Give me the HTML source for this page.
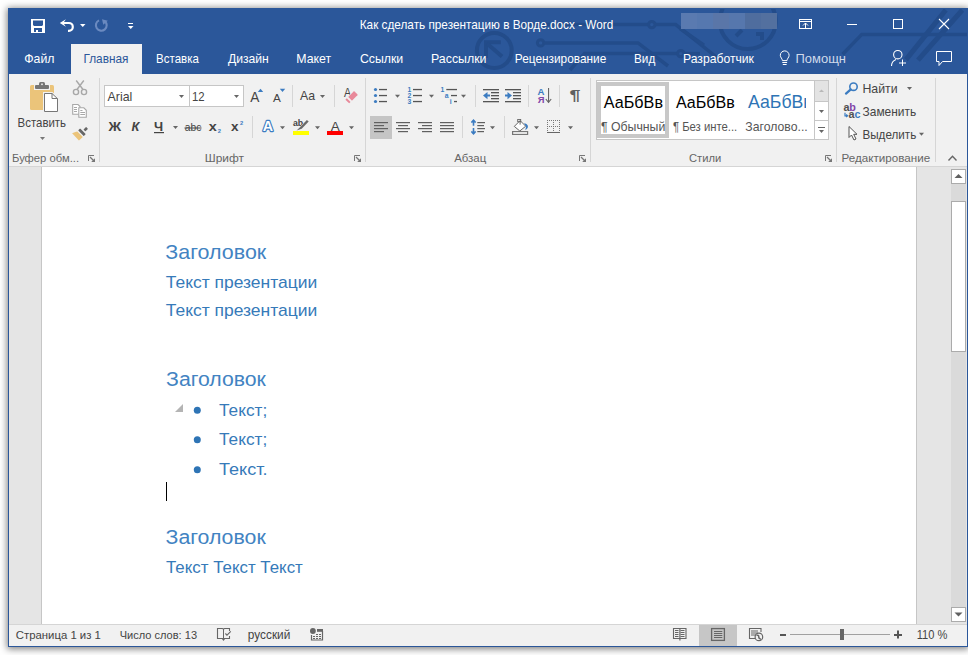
<!DOCTYPE html>
<html><head><meta charset="utf-8"><style>
html,body{margin:0;padding:0;width:968px;height:655px;overflow:hidden;background:#fff;font-family:"Liberation Sans", sans-serif;}
div,svg,text{font-family:"Liberation Sans", sans-serif;}
</style></head><body>
<div style="position:absolute;left:8px;top:8px;width:960px;height:639px;box-shadow:0 1px 7px 1px rgba(0,0,0,0.5);"></div>
<div style="position:absolute;left:8px;top:8px;width:960px;height:639px;background:#2B579A;"></div>
<div style="position:absolute;left:9px;top:74px;width:958px;height:92px;background:#F1F1F1;"></div>
<div style="position:absolute;left:9px;top:166px;width:958px;height:1px;background:#D5D5D5;"></div>
<div style="position:absolute;left:9px;top:167px;width:958px;height:457px;background:#E5E5E5;"></div>
<div style="position:absolute;left:41px;top:167px;width:1px;height:457px;background:#C6C6C6;"></div>
<div style="position:absolute;left:42px;top:167px;width:874px;height:457px;background:#FFFFFF;"></div>
<div style="position:absolute;left:916px;top:167px;width:1px;height:457px;background:#C6C6C6;"></div>
<div style="position:absolute;left:9px;top:624px;width:958px;height:1px;background:#D5D5D5;"></div>
<div style="position:absolute;left:9px;top:625px;width:958px;height:21px;background:#F1F1F1;"></div>
<div style="position:absolute;left:71px;top:44px;width:71px;height:30px;background:#F1F1F1;"></div>
<svg style="position:absolute;left:0;top:0" width="968" height="655" font-family="Liberation Sans, sans-serif">
<defs><clipPath id="tb"><rect x="9" y="9" width="958" height="65"/></clipPath></defs><g clip-path="url(#tb)"><g fill="none" stroke="#234C8A" stroke-width="3.5"><circle cx="494.3" cy="50.5" r="17.4" stroke-width="4"/><path d="M486 58 V42.3 H500.8" stroke-width="4"/><path d="M487 43.5 L502 56.5" stroke-width="4"/><path d="M520 24.6 H648"/><circle cx="651.8" cy="24.6" r="3.2" stroke-width="3"/><path d="M655 24.6 H675.7 L720 60"/><circle cx="540.6" cy="42.9" r="3.2" stroke-width="3"/><path d="M543.8 42.9 H638 L668 66"/><path d="M570 70 L584.6 53.6 H677.5"/><circle cx="680.8" cy="53.6" r="3.2" stroke-width="3"/><path d="M684 53.6 H700"/><circle cx="747.8" cy="21" r="28" stroke-width="4"/><path d="M680 28.5 L704 45.2"/><path d="M736 36 L742 30 M756 34 H762 V40" stroke-width="4"/><path d="M842.6 54.3 L861.8 34.4 H968"/><path d="M906 59.6 L945.8 10 M918 60.2 L962.3 10" stroke-width="5"/></g></g>
<text x="24.22" y="63" font-size="13.04" fill="#fff" textLength="30.22" lengthAdjust="spacingAndGlyphs" >Файл</text>
<text x="83.45" y="63" font-size="13.04" fill="#2B579A" textLength="45.03" lengthAdjust="spacingAndGlyphs" >Главная</text>
<text x="156.08" y="63" font-size="13.04" fill="#fff" textLength="42.74" lengthAdjust="spacingAndGlyphs" >Вставка</text>
<text x="227.94" y="63" font-size="13.04" fill="#fff" textLength="40.87" lengthAdjust="spacingAndGlyphs" >Дизайн</text>
<text x="296.31" y="63" font-size="13.04" fill="#fff" textLength="34.94" lengthAdjust="spacingAndGlyphs" >Макет</text>
<text x="359.88" y="63" font-size="13.04" fill="#fff" textLength="43.39" lengthAdjust="spacingAndGlyphs" >Ссылки</text>
<text x="431.01" y="63" font-size="13.04" fill="#fff" textLength="55.54" lengthAdjust="spacingAndGlyphs" >Рассылки</text>
<text x="514.85" y="63" font-size="13.04" fill="#fff" textLength="91.40" lengthAdjust="spacingAndGlyphs" >Рецензирование</text>
<text x="634.06" y="63" font-size="13.04" fill="#fff" textLength="21.16" lengthAdjust="spacingAndGlyphs" >Вид</text>
<text x="683.03" y="63" font-size="13.04" fill="#fff" textLength="70.93" lengthAdjust="spacingAndGlyphs" >Разработчик</text>
<text x="795.56" y="63" font-size="12.75" fill="#D0DAEA" textLength="50.42" lengthAdjust="spacingAndGlyphs" >Помощн</text>
<text x="359.76" y="29" font-size="13.04" fill="#fff" textLength="253.51" lengthAdjust="spacingAndGlyphs" >Как сделать презентацию в Ворде.docx - Word</text>
<text x="17.59" y="127" font-size="12.03" fill="#444444" textLength="48.46" lengthAdjust="spacingAndGlyphs" >Вставить</text>
<text x="12.00" y="162" font-size="11.59" fill="#666666" textLength="67.05" lengthAdjust="spacingAndGlyphs" >Буфер обм...</text>
<text x="204.75" y="162" font-size="11.59" fill="#666666" textLength="39.19" lengthAdjust="spacingAndGlyphs" >Шрифт</text>
<text x="454.20" y="162" font-size="11.59" fill="#666666" textLength="32.03" lengthAdjust="spacingAndGlyphs" >Абзац</text>
<text x="689.04" y="162" font-size="11.59" fill="#666666" textLength="32.25" lengthAdjust="spacingAndGlyphs" >Стили</text>
<text x="841.57" y="162" font-size="11.59" fill="#666666" textLength="88.59" lengthAdjust="spacingAndGlyphs" >Редактирование</text>
<text x="862.42" y="93" font-size="12.32" fill="#444444" textLength="35.13" lengthAdjust="spacingAndGlyphs" >Найти</text>
<text x="862.58" y="116" font-size="12.32" fill="#444444" textLength="53.58" lengthAdjust="spacingAndGlyphs" >Заменить</text>
<text x="862.47" y="139" font-size="12.32" fill="#444444" textLength="53.74" lengthAdjust="spacingAndGlyphs" >Выделить</text>
<rect x="104.5" y="85.5" width="139" height="21" fill="#fff" stroke="#C6C6C6" stroke-width="1"/>
<rect x="189" y="86" width="1" height="20" fill="#C6C6C6"/>
<text x="107.60" y="101" font-size="12.75" fill="#444444" textLength="24.71" lengthAdjust="spacingAndGlyphs" >Arial</text>
<text x="191.95" y="101" font-size="12.75" fill="#444444" textLength="12.65" lengthAdjust="spacingAndGlyphs" >12</text>
<text x="108.50" y="131" font-size="13.04" fill="#444444" font-weight="bold" textLength="12.61" lengthAdjust="spacingAndGlyphs" >Ж</text>
<text x="131.5" y="131" font-size="12.8" fill="#444444" font-weight="bold" font-style="italic" >К</text>
<text x="154.09" y="131" font-size="13.04" fill="#444444" font-weight="bold" textLength="9.09" lengthAdjust="spacingAndGlyphs" >Ч</text>
<text x="184.79" y="131" font-size="11.30" fill="#444444" textLength="16.49" lengthAdjust="spacingAndGlyphs" >abc</text>
<text x="208.86" y="131" font-size="12.61" fill="#444444" font-weight="bold" textLength="8.03" lengthAdjust="spacingAndGlyphs" >x</text>
<text x="217.7" y="133" font-size="5.8" fill="#3C7CC1" font-weight="bold" >2</text>
<text x="231.06" y="131" font-size="12.61" fill="#444444" font-weight="bold" textLength="7.52" lengthAdjust="spacingAndGlyphs" >x</text>
<text x="239.9" y="125.2" font-size="5.8" fill="#3C7CC1" font-weight="bold" >2</text>
<text x="250.30" y="102" font-size="14.49" fill="#444444" textLength="9.13" lengthAdjust="spacingAndGlyphs" >A</text>
<text x="273.00" y="102" font-size="11.30" fill="#444444" textLength="7.82" lengthAdjust="spacingAndGlyphs" >A</text>
<text x="300.10" y="100" font-size="13.33" fill="#444444" textLength="15.04" lengthAdjust="spacingAndGlyphs" >Aa</text>
<text x="343.90" y="97" font-size="11.88" fill="#444444" textLength="7.12" lengthAdjust="spacingAndGlyphs" >A</text>
<text x="262.64" y="131.3" font-size="14.49" fill="#FFFFFF" font-weight="bold" textLength="10.35" lengthAdjust="spacingAndGlyphs" stroke="#3C7CC1" stroke-width="2.3" paint-order="stroke" stroke-linejoin="round">A</text>
<text x="292.94" y="126" font-size="9.57" fill="#444444" font-weight="bold" textLength="10.23" lengthAdjust="spacingAndGlyphs" >ab</text>
<text x="330.80" y="130.5" font-size="13.48" fill="#444444" textLength="9.03" lengthAdjust="spacingAndGlyphs" >A</text>
<text x="407.6" y="92" font-size="6.8" fill="#3C7CC1" font-weight="bold" >1</text>
<text x="407.6" y="98" font-size="6.8" fill="#3C7CC1" font-weight="bold" >2</text>
<text x="407.6" y="104" font-size="6.8" fill="#3C7CC1" font-weight="bold" >3</text>
<text x="440.6" y="92" font-size="6.8" fill="#3C7CC1" font-weight="bold" >1</text>
<text x="444.7" y="98" font-size="6.8" fill="#3C7CC1" font-weight="bold" >a</text>
<text x="449.7" y="104" font-size="6.8" fill="#3C7CC1" font-weight="bold" >i</text>
<text x="537.5" y="95" font-size="9.6" fill="#3C7CC1" font-weight="bold" >A</text>
<text x="537.7" y="103" font-size="9.4" fill="#8144A8" font-weight="bold" >Я</text>
<text x="569.61" y="100" font-size="14.93" fill="#606060" font-weight="bold" textLength="11.01" lengthAdjust="spacingAndGlyphs" >¶</text>
<text x="843.5" y="111" font-size="10.8" fill="#505050" font-weight="bold" >a</text>
<text x="849.2" y="111" font-size="10.8" fill="#8144A8" font-weight="bold" >b</text>
<text x="848.6" y="118" font-size="10.8" fill="#505050" font-weight="bold" >a</text>
<text x="854.6" y="118" font-size="10.8" fill="#3C7CC1" font-weight="bold" >c</text>
<rect x="596.5" y="80.5" width="232" height="59" fill="#fff" stroke="#C6C6C6" stroke-width="1"/>
<rect x="599" y="84" width="68" height="52" fill="#fff" stroke="#C8C8C8" stroke-width="4"/>
<text x="603.80" y="108" font-size="16.23" fill="#000" textLength="59.17" lengthAdjust="spacingAndGlyphs" >АаБбВв</text>
<text x="675.90" y="108" font-size="16.52" fill="#000" textLength="58.87" lengthAdjust="spacingAndGlyphs" >АаБбВв</text>
<svg x="744" y="86" width="62" height="30" overflow="hidden">
<text x="4.00" y="22" font-size="18.26" fill="#2E74B5" textLength="64.74" lengthAdjust="spacingAndGlyphs" >АаБбВв</text>
</svg>
<text x="601.01" y="131" font-size="12.32" fill="#555" textLength="64.25" lengthAdjust="spacingAndGlyphs" >¶ Обычный</text>
<text x="672.95" y="131" font-size="12.03" fill="#555" textLength="64.31" lengthAdjust="spacingAndGlyphs" >¶ Без инте...</text>
<text x="745.37" y="131" font-size="12.17" fill="#555" textLength="62.36" lengthAdjust="spacingAndGlyphs" >Заголово...</text>
<text x="165.35" y="259" font-size="20.29" fill="#4283C2" textLength="100.88" lengthAdjust="spacingAndGlyphs" >Заголовок</text>
<text x="165.75" y="288" font-size="17.39" fill="#367AB9" textLength="151.49" lengthAdjust="spacingAndGlyphs" >Текст презентации</text>
<text x="165.75" y="316" font-size="17.39" fill="#367AB9" textLength="151.49" lengthAdjust="spacingAndGlyphs" >Текст презентации</text>
<text x="166.06" y="386" font-size="20.58" fill="#4283C2" textLength="99.88" lengthAdjust="spacingAndGlyphs" >Заголовок</text>
<text x="219.06" y="416" font-size="17.39" fill="#367AB9" textLength="48.22" lengthAdjust="spacingAndGlyphs" >Текст;</text>
<text x="219.06" y="445" font-size="17.39" fill="#367AB9" textLength="48.22" lengthAdjust="spacingAndGlyphs" >Текст;</text>
<text x="219.04" y="475" font-size="17.39" fill="#367AB9" textLength="48.47" lengthAdjust="spacingAndGlyphs" >Текст.</text>
<text x="165.55" y="544" font-size="20.72" fill="#4283C2" textLength="100.18" lengthAdjust="spacingAndGlyphs" >Заголовок</text>
<text x="165.96" y="573" font-size="17.10" fill="#367AB9" textLength="136.85" lengthAdjust="spacingAndGlyphs" >Текст Текст Текст</text>
<text x="15.73" y="639" font-size="11.59" fill="#444444" textLength="85.18" lengthAdjust="spacingAndGlyphs" >Страница 1 из 1</text>
<text x="119.72" y="639" font-size="11.59" fill="#444444" textLength="77.31" lengthAdjust="spacingAndGlyphs" >Число слов: 13</text>
<text x="247.83" y="639" font-size="12.03" fill="#444444" textLength="42.48" lengthAdjust="spacingAndGlyphs" >русский</text>
<text x="916.67" y="639" font-size="12.17" fill="#444444" textLength="30.74" lengthAdjust="spacingAndGlyphs" >110 %</text>
<rect x="31" y="19" width="14" height="14" fill="#FFFFFF"/>
<path d="M33 20.5 H43 V25 L42 26 H34 L33 25 Z" fill="#2B579A"/>
<rect x="34" y="28" width="8" height="4" fill="#2B579A"/>
<rect x="36" y="30" width="2" height="2" fill="#FFFFFF"/>
<path d="M63.5 23 H68.9 A3.9 3.9 0 0 1 68.9 30.8 H68" fill="none" stroke="#FFFFFF" stroke-width="2.2"/>
<path d="M59.8 23 L65.9 19.2 L64 22 V24 L65.9 26.8 Z" fill="#FFFFFF"/>
<path d="M80.0 23.9 H85.5 L82.75 26.9 Z" fill="#FFFFFF"/>
<path d="M99 20.4 A5.4 5.4 0 1 0 104.8 21.2" fill="none" stroke="#6B8AC0" stroke-width="2.1"/>
<path d="M102 19.2 L107.8 20.7 L103.3 24.8 Z" fill="#6B8AC0"/>
<rect x="128" y="23" width="5" height="1" fill="#FFFFFF"/>
<path d="M128 26 H133.5 L130.75 29 Z" fill="#FFFFFF"/>
<rect x="681" y="13" width="16" height="16" fill="#5A7AB0"/>
<rect x="697" y="13" width="16" height="16" fill="#5678AF"/>
<rect x="713" y="13" width="16" height="16" fill="#5A76A8"/>
<rect x="729" y="13" width="16" height="16" fill="#5677AD"/>
<rect x="745" y="13" width="16" height="16" fill="#4F6D9E"/>
<rect x="761" y="13" width="16" height="16" fill="#53709F"/>
<rect x="799.5" y="19.5" width="12" height="9" fill="none" stroke="#FFFFFF"/>
<rect x="800" y="21" width="11" height="1" fill="#FFFFFF"/>
<rect x="805" y="23" width="1" height="5" fill="#FFFFFF"/>
<path d="M803 25.5 L805.5 23 L808 25.5" fill="none" stroke="#FFFFFF"/>
<rect x="847" y="24" width="10" height="1" fill="#FFFFFF"/>
<rect x="893.5" y="19.5" width="9" height="9" fill="none" stroke="#FFFFFF"/>
<path d="M939 19 L949 29 M949 19 L939 29" stroke="#FFFFFF" stroke-width="1.1"/>
<path d="M782.4 60.6 C782.4 58.6 780.3 57.6 780.3 55.3 A4.4 4.4 0 0 1 789.1 55.3 C789.1 57.6 787 58.6 787 60.6 Z" fill="none" stroke="#FFFFFF" stroke-width="1"/>
<rect x="782.3" y="62" width="4.800000000000068" height="1" fill="#FFFFFF"/>
<rect x="782.8" y="64" width="3.800000000000068" height="1" fill="#FFFFFF"/>
<circle cx="897.8" cy="54.7" r="4.2" fill="none" stroke="#FFFFFF" stroke-width="1.1"/>
<path d="M891.5 66 A7 7 0 0 1 896 59.5" fill="none" stroke="#FFFFFF" stroke-width="1.1"/>
<rect x="899" y="62.5" width="7" height="1" fill="#FFFFFF"/>
<rect x="902" y="59.5" width="1" height="6.5" fill="#FFFFFF"/>
<path d="M936.5 51.5 H951.5 V61.5 H942.5 L939 65.5 V61.5 H936.5 Z" fill="none" stroke="#FFFFFF" stroke-width="1"/>
<rect x="30" y="85" width="24" height="25" rx="1.5" fill="#EBC47A"/>
<rect x="34" y="84" width="16" height="6" fill="#F1F1F1"/>
<rect x="35" y="85" width="14" height="4" rx="1" fill="#767676"/>
<rect x="39" y="82" width="6" height="4" rx="1.5" fill="#767676"/>
<rect x="41.2" y="83.5" width="1.6" height="1.6" fill="#F1F1F1"/>
<path d="M43 92 H52.5 L59 98 V113 H43 Z" fill="#F1F1F1"/>
<path d="M44.5 93.5 H52 L57.5 98.7 V111.5 H44.5 Z" fill="#FFFFFF" stroke="#767676" stroke-width="1"/>
<path d="M52 93.5 V98.5 H57.5" fill="none" stroke="#767676" stroke-width="1"/>
<path d="M40.0 137.1 H45.0 L42.5 140.1 Z" fill="#777"/>
<g fill="none" stroke="#A8A8A8" stroke-width="1.4"><path d="M76.2 80.5 L83 89.5 M83.8 80.5 L77 89.5"/><circle cx="76" cy="92" r="2.6"/><circle cx="84" cy="92" r="2.6"/></g>
<g fill="#FFFFFF" stroke="#A8A8A8" stroke-width="1.1"><path d="M72.7 104.5 H78 L80 106.5 V114.3 H72.7 Z"/><path d="M78.8 107.8 H83.8 L86.3 110.3 V117.3 H78.8 Z"/></g>
<g fill="#A8A8A8"><rect x="74" y="107" width="3" height="1"/><rect x="74" y="109" width="3" height="1"/><rect x="74" y="111" width="3" height="1"/><rect x="80.3" y="110" width="2.2" height="1"/><rect x="80.3" y="112" width="4.7" height="1"/><rect x="80.3" y="114" width="4.7" height="1"/></g>
<g transform="translate(80.5 133.8) rotate(-45)"><path d="M-0.7 -3.8 L-2.3 -5 L-5.5 -6.4 L-5.9 3.7 L-0.7 4 Z" fill="#EBC47A"/><rect x="0.7" y="-4" width="2.8" height="7.9" rx="0.5" fill="#676767"/><rect x="5.1" y="-0.9" width="3.7" height="2.7" rx="0.5" fill="#676767"/></g>
<path d="M88.5 161 V155.5 H94" fill="none" stroke="#777" stroke-width="1"/>
<path d="M90 157 L94 161" stroke="#777" stroke-width="1.2"/>
<path d="M95 158.2 V162 H91.2 Z" fill="#777"/>
<path d="M354.5 161 V155.5 H360" fill="none" stroke="#777" stroke-width="1"/>
<path d="M356 157 L360 161" stroke="#777" stroke-width="1.2"/>
<path d="M361 158.2 V162 H357.2 Z" fill="#777"/>
<path d="M579.5 161 V155.5 H585" fill="none" stroke="#777" stroke-width="1"/>
<path d="M581 157 L585 161" stroke="#777" stroke-width="1.2"/>
<path d="M586 158.2 V162 H582.2 Z" fill="#777"/>
<path d="M825.5 161 V155.5 H831" fill="none" stroke="#777" stroke-width="1"/>
<path d="M827 157 L831 161" stroke="#777" stroke-width="1.2"/>
<path d="M832 158.2 V162 H828.2 Z" fill="#777"/>
<rect x="99" y="78" width="1" height="84" fill="#D6D6D6"/>
<rect x="365" y="78" width="1" height="84" fill="#D6D6D6"/>
<rect x="590" y="78" width="1" height="84" fill="#D6D6D6"/>
<rect x="836" y="78" width="1" height="84" fill="#D6D6D6"/>
<rect x="935" y="78" width="1" height="84" fill="#D6D6D6"/>
<rect x="292" y="85" width="1" height="22" fill="#D6D6D6"/>
<rect x="334" y="85" width="1" height="22" fill="#D6D6D6"/>
<rect x="252" y="116" width="1" height="22" fill="#D6D6D6"/>
<rect x="475" y="85" width="1" height="22" fill="#D6D6D6"/>
<rect x="528" y="85" width="1" height="22" fill="#D6D6D6"/>
<rect x="559" y="85" width="1" height="22" fill="#D6D6D6"/>
<rect x="462" y="116" width="1" height="22" fill="#D6D6D6"/>
<rect x="504" y="116" width="1" height="22" fill="#D6D6D6"/>
<path d="M179.0 95.0 H184.0 L181.5 98.0 Z" fill="#666666"/>
<path d="M234.0 95.0 H239.0 L236.5 98.0 Z" fill="#666666"/>
<path d="M173.0 126.0 H178.0 L175.5 129.0 Z" fill="#666666"/>
<rect x="154" y="132" width="10" height="1.2" fill="#444444"/>
<rect x="184.5" y="127.5" width="17.0" height="1" fill="#444444"/>
<path d="M257.8 92 H263.2 L260.5 88.8 Z" fill="#3C7CC1"/>
<path d="M279.8 88.8 H285.2 L282.5 92 Z" fill="#3C7CC1"/>
<path d="M320.0 95.0 H325.0 L322.5 98.0 Z" fill="#666666"/>
<g transform="translate(353 95.8) rotate(-45)" fill="#E8899A" stroke="#F1F1F1" stroke-width="1" paint-order="stroke"><rect x="-4.15" y="-2.65" width="8.3" height="5.3" rx="0.6"/><rect x="-8.1" y="-2.65" width="2" height="5.3" rx="0.4"/></g>
<path d="M280.0 126.2 H285.0 L282.5 129.2 Z" fill="#666666"/>
<path d="M315.0 126.2 H320.0 L317.5 129.2 Z" fill="#666666"/>
<path d="M349.0 126.2 H354.0 L351.5 129.2 Z" fill="#666666"/>
<rect x="293" y="131" width="16" height="4" fill="#FFFF00"/>
<rect x="327" y="131" width="16" height="4" fill="#FF0000"/>
<path d="M296.6 130.6 L299.9 127.2 L306.9 120 L308.7 121.6 L301.7 128.8 Z" fill="#6A6A6A" stroke="#F1F1F1" stroke-width="0.9" paint-order="stroke"/>
<circle cx="375.5" cy="89.5" r="1.6" fill="#3C7CC1"/>
<rect x="379" y="88.9" width="8" height="1.3" fill="#555555"/>
<circle cx="375.5" cy="95.5" r="1.6" fill="#3C7CC1"/>
<rect x="379" y="94.9" width="8" height="1.3" fill="#555555"/>
<circle cx="375.5" cy="101.5" r="1.6" fill="#3C7CC1"/>
<rect x="379" y="100.9" width="8" height="1.3" fill="#555555"/>
<path d="M395.0 94.8 H400.0 L397.5 97.8 Z" fill="#666666"/>
<rect x="413" y="88.9" width="9" height="1.3" fill="#555555"/>
<rect x="413" y="94.9" width="9" height="1.3" fill="#555555"/>
<rect x="413" y="100.9" width="9" height="1.3" fill="#555555"/>
<path d="M429.0 94.8 H434.0 L431.5 97.8 Z" fill="#666666"/>
<rect x="446.3" y="88.9" width="10.699999999999989" height="1.3" fill="#555555"/>
<rect x="451" y="94.9" width="6" height="1.3" fill="#555555"/>
<rect x="454" y="100.9" width="3" height="1.3" fill="#555555"/>
<path d="M461.0 94.8 H466.0 L463.5 97.8 Z" fill="#666666"/>
<rect x="483" y="89" width="16" height="1.3" fill="#555555"/>
<rect x="483" y="101" width="16" height="1.3" fill="#555555"/>
<rect x="491" y="92" width="8" height="1.3" fill="#555555"/>
<rect x="491" y="95" width="8" height="1.3" fill="#555555"/>
<rect x="491" y="98" width="8" height="1.3" fill="#555555"/>
<path d="M483 95.6 L487.5 92 V94.6 H490 V96.6 H487.5 V99.2 Z" fill="#3C7CC1"/>
<rect x="505" y="89" width="16" height="1.3" fill="#555555"/>
<rect x="505" y="101" width="16" height="1.3" fill="#555555"/>
<rect x="513" y="92" width="8" height="1.3" fill="#555555"/>
<rect x="513" y="95" width="8" height="1.3" fill="#555555"/>
<rect x="513" y="98" width="8" height="1.3" fill="#555555"/>
<path d="M512 95.6 L507.5 92 V94.6 H505 V96.6 H507.5 V99.2 Z" fill="#3C7CC1"/>
<rect x="548" y="88" width="1.1" height="14.5" fill="#666666"/>
<path d="M545.8 99 L548.5 102.3 L551.2 99" fill="none" stroke="#666666" stroke-width="1.1"/>
<rect x="370" y="116" width="22" height="23" fill="#C5C5C5"/>
<rect x="374" y="122" width="14" height="1.2" fill="#606060"/>
<rect x="396" y="122" width="14" height="1.2" fill="#606060"/>
<rect x="418" y="122" width="14" height="1.2" fill="#606060"/>
<rect x="440" y="122" width="14" height="1.2" fill="#606060"/>
<rect x="374" y="125" width="10" height="1.2" fill="#606060"/>
<rect x="398" y="125" width="10" height="1.2" fill="#606060"/>
<rect x="422" y="125" width="10" height="1.2" fill="#606060"/>
<rect x="440" y="125" width="14" height="1.2" fill="#606060"/>
<rect x="374" y="128" width="14" height="1.2" fill="#606060"/>
<rect x="396" y="128" width="14" height="1.2" fill="#606060"/>
<rect x="418" y="128" width="14" height="1.2" fill="#606060"/>
<rect x="440" y="128" width="14" height="1.2" fill="#606060"/>
<rect x="374" y="131" width="10" height="1.2" fill="#606060"/>
<rect x="398" y="131" width="10" height="1.2" fill="#606060"/>
<rect x="422" y="131" width="10" height="1.2" fill="#606060"/>
<rect x="440" y="131" width="14" height="1.2" fill="#606060"/>
<g fill="none" stroke="#3C7CC1" stroke-width="1.6"><path d="M473.5 125.7 V120.5 M473.5 128.1 V133.5"/><path d="M471.4 122.6 L473.5 120.2 L475.6 122.6 M471.4 131.4 L473.5 133.8 L475.6 131.4"/></g>
<rect x="477.3" y="122" width="7.699999999999989" height="1.2" fill="#606060"/>
<rect x="477.3" y="125" width="6.699999999999989" height="1.2" fill="#606060"/>
<rect x="477.3" y="128" width="7.699999999999989" height="1.2" fill="#606060"/>
<rect x="477.3" y="131" width="6.699999999999989" height="1.2" fill="#606060"/>
<path d="M490.0 126.2 H495.0 L492.5 129.2 Z" fill="#666666"/>
<rect x="512.6" y="131.6" width="15" height="2.8" fill="#FFF" stroke="#777" stroke-width="1.2"/>
<path d="M514.3 126.4 L520.1 120.6 L525.7 126.2 L519.8 131 Z" fill="#FFF" stroke="#666" stroke-width="1"/>
<rect x="517.7" y="119.5" width="3" height="2.2" fill="none" stroke="#666" stroke-width="0.9"/>
<path d="M520.1 121 V124.6" fill="none" stroke="#666" stroke-width="1"/>
<path d="M524 123.3 C527 123.6 528.8 125.8 527.6 128 C527 129 526 129.8 525.3 130.3 L526 126.7 Z" fill="#3C7CC1"/>
<path d="M534.0 126.2 H539.0 L536.5 129.2 Z" fill="#666666"/>
<rect x="547" y="120" width="1" height="1" fill="#777"/>
<rect x="547" y="122" width="1" height="1" fill="#777"/>
<rect x="547" y="124" width="1" height="1" fill="#777"/>
<rect x="547" y="126" width="1" height="1" fill="#777"/>
<rect x="547" y="128" width="1" height="1" fill="#777"/>
<rect x="547" y="130" width="1" height="1" fill="#777"/>
<rect x="549" y="120" width="1" height="1" fill="#777"/>
<rect x="549" y="126" width="1" height="1" fill="#777"/>
<rect x="551" y="120" width="1" height="1" fill="#777"/>
<rect x="551" y="126" width="1" height="1" fill="#777"/>
<rect x="553" y="120" width="1" height="1" fill="#777"/>
<rect x="553" y="122" width="1" height="1" fill="#777"/>
<rect x="553" y="124" width="1" height="1" fill="#777"/>
<rect x="553" y="126" width="1" height="1" fill="#777"/>
<rect x="553" y="128" width="1" height="1" fill="#777"/>
<rect x="553" y="130" width="1" height="1" fill="#777"/>
<rect x="555" y="120" width="1" height="1" fill="#777"/>
<rect x="555" y="126" width="1" height="1" fill="#777"/>
<rect x="557" y="120" width="1" height="1" fill="#777"/>
<rect x="557" y="126" width="1" height="1" fill="#777"/>
<rect x="559" y="120" width="1" height="1" fill="#777"/>
<rect x="559" y="122" width="1" height="1" fill="#777"/>
<rect x="559" y="124" width="1" height="1" fill="#777"/>
<rect x="559" y="126" width="1" height="1" fill="#777"/>
<rect x="559" y="128" width="1" height="1" fill="#777"/>
<rect x="559" y="130" width="1" height="1" fill="#777"/>
<rect x="547" y="132" width="13" height="1" fill="#666"/>
<path d="M568.0 126.2 H573.0 L570.5 129.2 Z" fill="#666666"/>
<rect x="814.5" y="80.5" width="14" height="59" fill="#FFF" stroke="#C6C6C6"/>
<rect x="815" y="81" width="13" height="20" fill="#E3E3E3"/>
<rect x="815" y="101" width="13" height="1" fill="#C6C6C6"/>
<rect x="815" y="120" width="13" height="1" fill="#C6C6C6"/>
<path d="M819 92 H824 L821.5 89.5 Z" fill="#B8B8B8"/>
<path d="M819.0 110.0 H824.0 L821.5 113.0 Z" fill="#666"/>
<rect x="818" y="127" width="7" height="1" fill="#666"/>
<path d="M819.0 130.0 H824.0 L821.5 133.0 Z" fill="#666"/>
<circle cx="853.5" cy="86.7" r="3.7" fill="none" stroke="#3C7CC1" stroke-width="1.6"/>
<path d="M850.8 89.4 L846 93.6" stroke="#3C7CC1" stroke-width="2.3" stroke-linecap="round"/>
<path d="M907.0 87.0 H912.0 L909.5 90.0 Z" fill="#666666"/>
<path d="M919.0 132.8 H924.0 L921.5 135.8 Z" fill="#666666"/>
<path d="M845 112.8 V115.8 H847.3 M846.2 114.5 L847.6 115.8 L846.2 117.1" fill="none" stroke="#3C7CC1" stroke-width="1.2"/>
<path d="M849 126.5 V137.5 L851.5 135 L854 140 L856 139 L853.7 134.3 H857 Z" fill="#FFF" stroke="#555" stroke-width="1" stroke-linejoin="round"/>
<path d="M948.5 160.5 L952.5 156.3 L956.5 160.5" fill="none" stroke="#666" stroke-width="1.4"/>
<path d="M175 412 H183 V404 Z" fill="#B4B4B4"/>
<circle cx="197.3" cy="410.3" r="3.5" fill="#2E74B5"/>
<circle cx="197.3" cy="439.8" r="3.5" fill="#2E74B5"/>
<circle cx="197.3" cy="469.8" r="3.5" fill="#2E74B5"/>
<rect x="166" y="482" width="1" height="19" fill="#000"/>
<rect x="951" y="167" width="16" height="457" fill="#E5E5E5"/>
<rect x="951" y="184" width="15" height="423" fill="#DADADA"/>
<rect x="951.5" y="169.5" width="14" height="14" fill="#FFF" stroke="#ABABAB"/>
<path d="M954.5 178 H962.5 L958.5 174 Z" fill="#606060"/>
<rect x="951.5" y="201.5" width="14" height="150" fill="#FFF" stroke="#ABABAB"/>
<rect x="951.5" y="607.5" width="14" height="14" fill="#FFF" stroke="#ABABAB"/>
<path d="M954.5 612.5 H962.5 L958.5 616.5 Z" fill="#606060"/>
<g fill="none" stroke="#666666" stroke-width="1.1"><path d="M223.5 629 L222.3 628.5 H217.5 V638.5 H223.5 M223.5 629 L224.7 628.5 H229.5 V631 M229.5 636 V638.5 H223.5 V640"/><path d="M225.4 633.5 L227 635.2 L230.8 631.3"/></g>
<path d="M222 639 L223.5 641 L225 639 Z" fill="#666666"/>
<rect x="223" y="629" width="1" height="11" fill="#666666"/>
<circle cx="312.9" cy="631" r="2.9" fill="#666666"/>
<rect x="317" y="629" width="6" height="2.8" fill="#666666"/>
<path d="M311.5 635 V640 H322.5 V631" fill="none" stroke="#666666" stroke-width="1.2"/>
<rect x="316" y="634" width="2" height="1" fill="#666666"/>
<rect x="319" y="634" width="2" height="1" fill="#666666"/>
<rect x="313" y="636" width="2" height="1" fill="#666666"/>
<rect x="316" y="636" width="2" height="1" fill="#666666"/>
<rect x="319" y="636" width="2" height="1" fill="#666666"/>
<rect x="313" y="638" width="2" height="1" fill="#666666"/>
<rect x="316" y="638" width="2" height="1" fill="#666666"/>
<rect x="319" y="638" width="2" height="1" fill="#666666"/>
<g fill="none" stroke="#666666" stroke-width="1.1"><path d="M673.5 628.5 H686 V638.5 H673.5 Z"/></g>
<rect x="679.3" y="628" width="1.2" height="12.5" fill="#666666"/>
<rect x="675" y="630" width="3.5" height="1" fill="#666666"/>
<rect x="680.5" y="630" width="4.0" height="1" fill="#666666"/>
<rect x="675" y="632" width="3.5" height="1" fill="#666666"/>
<rect x="680.5" y="632" width="4.0" height="1" fill="#666666"/>
<rect x="675" y="634" width="3.5" height="1" fill="#666666"/>
<rect x="680.5" y="634" width="4.0" height="1" fill="#666666"/>
<rect x="675" y="636" width="3.5" height="1" fill="#666666"/>
<rect x="680.5" y="636" width="4.0" height="1" fill="#666666"/>
<rect x="699" y="625" width="38" height="21" fill="#C6C6C6"/>
<rect x="711.6" y="628.6" width="12.8" height="11.8" fill="none" stroke="#666666" stroke-width="1.3"/>
<rect x="714" y="631" width="8.299999999999955" height="1" fill="#666666"/>
<rect x="714" y="633" width="8.299999999999955" height="1" fill="#666666"/>
<rect x="714" y="635" width="8.299999999999955" height="1" fill="#666666"/>
<rect x="714" y="637" width="8.299999999999955" height="1" fill="#666666"/>
<path d="M756 638.5 H749.5 V628.5 H761 V632" fill="none" stroke="#666666" stroke-width="1.1"/>
<rect x="751" y="630.5" width="7" height="1" fill="#666666"/>
<rect x="751" y="632.5" width="7" height="1" fill="#666666"/>
<rect x="751" y="634.5" width="7" height="1" fill="#666666"/>
<circle cx="758.9" cy="636.9" r="3.8" fill="#F1F1F1" stroke="#666666" stroke-width="1.2"/>
<path d="M756.5 635 L758.5 635.5 L759 638 L761 639.5" fill="none" stroke="#666666" stroke-width="1.5"/>
<rect x="780" y="634" width="6" height="2" fill="#555"/>
<rect x="790" y="634" width="100" height="1" fill="#A0A0A0"/>
<rect x="840" y="629" width="4" height="11" fill="#666"/>
<rect x="894" y="634" width="8" height="2" fill="#555"/>
<rect x="897" y="630.5" width="2" height="8.0" fill="#555"/>
</svg>
</body></html>
